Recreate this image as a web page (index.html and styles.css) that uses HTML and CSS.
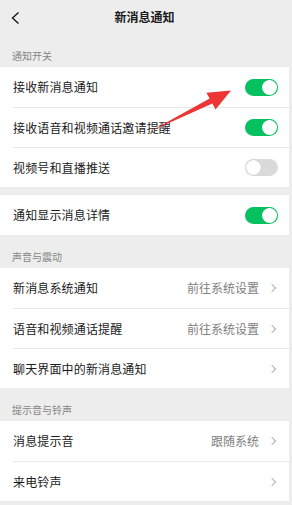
FILE: index.html
```html
<!DOCTYPE html>
<html lang="zh">
<head>
<meta charset="utf-8">
<title>新消息通知</title>
<link rel="stylesheet" href="styles.css">
</head>
<body>
<div class="page">
  <header class="header">
    <svg class="back" width="10" height="14" viewBox="0 0 10 14"><polyline points="7.5,1.5 1.5,7 7.5,12.5" fill="none" stroke="#1a1a1a" stroke-width="1.4"/></svg>
    <div class="title">新消息通知</div>
  </header>

  <div class="label">通知开关</div>
  <div class="card">
    <div class="row"><span class="text">接收新消息通知</span><span class="switch on"></span></div>
    <div class="row"><span class="text">接收语音和视频通话邀请提醒</span><span class="switch on"></span></div>
    <div class="row"><span class="text">视频号和直播推送</span><span class="switch"></span></div>
  </div>
  <div class="card gap">
    <div class="row"><span class="text">通知显示消息详情</span><span class="switch on"></span></div>
  </div>

  <div class="label">声音与震动</div>
  <div class="card">
    <div class="row"><span class="text">新消息系统通知</span><span class="value">前往系统设置</span><span class="chev"></span></div>
    <div class="row"><span class="text">语音和视频通话提醒</span><span class="value">前往系统设置</span><span class="chev"></span></div>
    <div class="row"><span class="text">聊天界面中的新消息通知</span><span class="chev"></span></div>
  </div>

  <div class="label">提示音与铃声</div>
  <div class="card">
    <div class="row"><span class="text">消息提示音</span><span class="value">跟随系统</span><span class="chev"></span></div>
    <div class="row"><span class="text">来电铃声</span><span class="chev"></span></div>
  </div>
</div>
<svg class="arrow" width="292" height="505" viewBox="0 0 292 505">
  <polygon points="151,131 209.6,98.4 206.4,92.8 231,90.5 215.6,109.5 212.4,103.6" fill="#ee3535"/>
</svg>
</body>
</html>
```

FILE: styles.css
```css
* { box-sizing: border-box; }
html, body { margin: 0; padding: 0; }
body {
  background: #ededed;
  font-family: "Noto Sans CJK SC", "Noto Sans", sans-serif;
  color: #1a1a1a;
  width: 292px;
  height: 505px;
  overflow: hidden;
  position: relative;
}
.page { width: 289px; }
.header {
  height: 34px;
  display: flex;
  align-items: center;
  justify-content: center;
  position: relative;
}
.back { position: absolute; left: 11px; top: 11px; }
.title { font-size: 12px; font-weight: 700; line-height: 16px; }
.label {
  padding: 16px 12px 5px;
  font-size: 10px;
  line-height: 12px;
  color: #858585;
}
.card { background: #fff; }
.card.gap { margin-top: 8px; }
.row {
  height: 40px;
  margin-left: 13px;
  padding-right: 11px;
  display: flex;
  align-items: center;
  border-top: 1px solid #e9e9e9;
}
.row:first-child { border-top: none; }
.text { flex: 1; font-size: 12px; letter-spacing: 0.15px; line-height: 16px; }
.value { font-size: 12px; color: #808080; line-height: 16px; margin-right: 10px; }
.chev {
  width: 6px; height: 6px;
  border-top: 1px solid #b2b2b2;
  border-right: 1px solid #b2b2b2;
  transform: rotate(45deg);
  margin-right: 3px;
}
.switch {
  width: 33px; height: 17px;
  border-radius: 9px;
  background: #dadada;
  position: relative;
}
.switch::after {
  content: "";
  position: absolute;
  left: 1px; top: 1px;
  width: 15px; height: 15px;
  border-radius: 50%;
  background: #fff;
  box-shadow: 0 0 1px rgba(0,0,0,0.25);
}
.switch.on { background: #07c160; }
.switch.on::after { left: 17px; }
.arrow { position: absolute; left: 0; top: 0; pointer-events: none; }
```
